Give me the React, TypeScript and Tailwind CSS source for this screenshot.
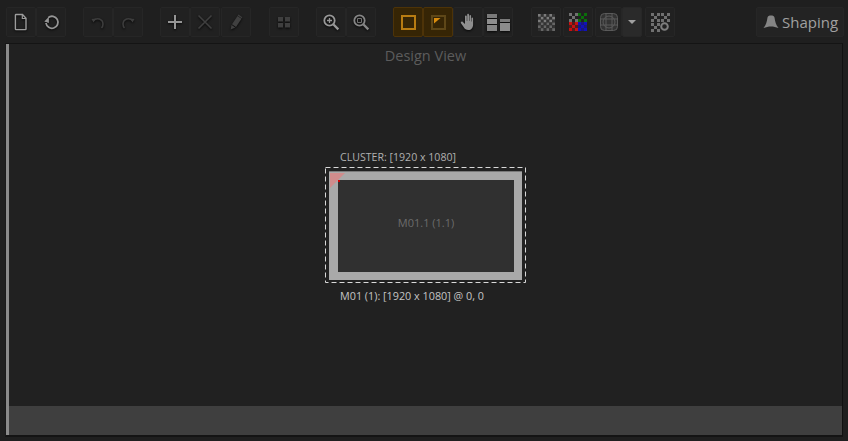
import React from "react";

const base = "flex items-center justify-center h-[30px] rounded-[2px] border border-[#262626] bg-[#212121] shrink-0";

function Btn({ w = 30, on = false, children }: { w?: number; on?: boolean; children?: React.ReactNode }) {
  return (
    <div
      className={on ? "flex items-center justify-center h-[30px] rounded-[2px] border border-[#4d3308] bg-[#362505] shrink-0" : base}
      style={{ width: w }}
    >
      {children}
    </div>
  );
}

const Ic = ({ children, s = 22 }: { children: React.ReactNode; s?: number }) => (
  <svg width={s} height={s} viewBox="0 0 22 22" fill="none" className="drop-shadow-[0_1px_1px_rgba(0,0,0,0.8)]">
    {children}
  </svg>
);

function Checker({ size = 17 }: { size?: number }) {
  const cells: React.ReactNode[] = [];
  for (let y = 0; y < 6; y++)
    for (let x = 0; x < 6; x++)
      cells.push(<rect key={`${x}-${y}`} x={x * 3} y={y * 3} width="3" height="3" fill={(x + y) % 2 === 0 ? (y < 3 ? "#7c7c7c" : "#666") : "#333"} />);
  return (
    <svg width={size} height={size} viewBox="0 0 18 18" className="blur-[0.3px]">
      {cells}
    </svg>
  );
}

function Quad({ color, x0, y0 }: { color: string; x0: number; y0: number }) {
  const cells: React.ReactNode[] = [];
  for (let y = 0; y < 3; y++)
    for (let x = 0; x < 3; x++)
      if ((x + y) % 2 === 0) cells.push(<rect key={`${x}-${y}`} x={x0 + x * 3} y={y0 + y * 3} width="3" height="3" fill={color} />);
  return <>{cells}</>;
}

export default function App() {
  return (
    <div className="w-[848px] h-[441px] bg-[#1f1f1f] flex flex-col overflow-hidden font-['Open_Sans',sans-serif]">
      <div className="h-[43px] shrink-0 pt-[7px] pl-[6px] pr-[4px] flex items-start">
        <Btn>
          <Ic>
            <path d="M6 3.500h6.500l3.500 3.800V18a.6.6 0 0 1-.6.6H6a.6.6 0 0 1-.6-.6V4a.6.6 0 0 1 .6-.5z" stroke="#9c9c9c" strokeWidth="1.400" />
            <path d="M12.300 3.500v4h3.700" stroke="#9c9c9c" strokeWidth="1.200" />
          </Ic>
        </Btn>
        <Btn>
          <Ic>
            <path d="M8.200 6.600A6 6 0 1 1 6 12" stroke="#969696" strokeWidth="1.800" />
            <path d="M4.300 10.600l4.600-4.900v6.200z" fill="#969696" />
          </Ic>
        </Btn>
        <div className="ml-[17px] flex">
          <Btn>
            <Ic>
              <path d="M6.500 9.500A5.500 5.500 0 0 1 16 13c0 1.700-.5 3-1.500 4" stroke="#3d3d3d" strokeWidth="1.600" />
              <path d="M4.500 8l4.500-.5-2.500 4z" fill="#3d3d3d" />
            </Ic>
          </Btn>
          <Btn>
            <Ic>
              <path d="M15.500 9.500A5.500 5.500 0 0 0 6 13c0 1.700.5 3 1.500 4" stroke="#3d3d3d" strokeWidth="1.600" />
              <path d="M17.500 8l-4.500-.5 2.500 4z" fill="#3d3d3d" />
            </Ic>
          </Btn>
        </div>
        <div className="ml-[17px] flex">
          <Btn>
            <Ic>
              <path d="M11 4v14M4 11h14" stroke="#959595" strokeWidth="2" />
            </Ic>
          </Btn>
          <Btn>
            <Ic>
              <path d="M4.500 4.500l13 13M17.500 4.500l-13 13" stroke="#3f3f3f" strokeWidth="1.600" />
            </Ic>
          </Btn>
          <div className="ml-[1px]">
            <Btn>
              <Ic>
                <path d="M12.500 5l4 2.800-5.500 8.200-4-2.800z" fill="#404040" />
                <path d="M6.500 14l3.800 2.600-4.600 2z" fill="#404040" />
                <path d="M13.500 3.500l3.800 2.700-.8 1-3.800-2.700z" fill="#404040" />
              </Ic>
            </Btn>
          </div>
        </div>
        <div className="ml-[18px]">
          <Btn>
            <Ic>
              <path d="M5 6h5v4.500H5zM12 6h5v4.500h-5zM5 12h5v4.500H5zM12 12h5v4.500h-5z" fill="#3f3f3f" />
            </Ic>
          </Btn>
        </div>
        <div className="ml-[17px] flex">
          <Btn>
            <Ic>
              <circle cx="9.500" cy="9.500" r="5.200" stroke="#989898" strokeWidth="1.800" />
              <path d="M13.500 13.500l4.800 4.800" stroke="#989898" strokeWidth="2.400" />
              <path d="M7 9.500h5M9.500 7v5" stroke="#989898" strokeWidth="1.300" />
            </Ic>
          </Btn>
          <Btn>
            <Ic>
              <circle cx="9.500" cy="9.500" r="5.200" stroke="#868686" strokeWidth="1.800" />
              <path d="M13.500 13.500l4.800 4.800" stroke="#868686" strokeWidth="2.400" />
              <path d="M7.500 7.500h4v4h-4z" stroke="#707070" strokeWidth="1" />
            </Ic>
          </Btn>
        </div>
        <div className="ml-[17px] flex">
          <Btn on>
            <div className="w-[15px] h-[15px] border-2 border-[#b87c12]" />
          </Btn>
          <Btn on>
            <div className="w-[15px] h-[15px] border-2 border-[#5e4718] flex">
              <svg width="11" height="11" viewBox="0 0 11 11">
                <path d="M1 1h6.500L1 6.500z" fill="#d98c0e" />
              </svg>
            </div>
          </Btn>
          <Btn>
            <Ic>
              <path
                d="M8 5.500c0-1.400 1.800-1.400 1.800 0V10l.4-.1V3.800c0-1.400 1.800-1.400 1.800 0v6l.4.100V5c0-1.300 1.700-1.300 1.700 0v5.500l.4.100V7.500c0-1.200 1.600-1.200 1.600 0v6c0 3.500-2 5.500-4.700 5.500-2.300 0-3.500-.8-4.800-3L4 12.200c-.7-1.200.8-2.300 1.800-1.300L8 13z"
                fill="#8e8e8e"
              />
            </Ic>
          </Btn>
          <Btn>
            <svg width="24" height="24" viewBox="0 0 24 24" className="drop-shadow-[0_1px_1px_rgba(0,0,0,0.8)]">
              <rect x="1" y="4" width="10" height="4" fill="#7a7a7a" />
              <rect x="1" y="9" width="10" height="5" fill="#8e8e8e" />
              <rect x="1" y="15" width="10" height="6" fill="#858585" />
              <rect x="14" y="9" width="10" height="3" fill="#7a7a7a" />
              <rect x="14" y="13" width="10" height="8" fill="#8c8c8c" />
            </svg>
          </Btn>
        </div>
        <div className="ml-[18px] flex gap-[2px]">
          <Btn>
            <Checker />
          </Btn>
          <Btn>
            <svg width="22" height="22" viewBox="0 0 22 22">
              <Quad color="#707070" x0={2} y0={2} />
              <Quad color="#0a6e0a" x0={11} y0={2} />
              <Quad color="#c81010" x0={2} y0={11} />
              <Quad color="#1212b8" x0={11} y0={11} />
              <rect x="2" y="11" width="9" height="9" fill="#c81010" opacity="0.3" />
              <rect x="11" y="11" width="9" height="9" fill="#1212b8" opacity="0.6" />
            </svg>
          </Btn>
          <div className="flex">
            <Btn w={27}>
              <svg width="18" height="18" viewBox="0 0 18 18" fill="none" stroke="#5a5a5a" strokeWidth="1">
                <rect x="0.500" y="0.500" width="17" height="17" rx="4" fill="#333" />
                <circle cx="9" cy="9" r="6" />
                <path d="M1 6h16M1 12h16M6 1v16M12 1v16" />
              </svg>
            </Btn>
            <div className="w-[20px] h-[30px] bg-[#2a2a2a] border border-[#272727] rounded-[2px] flex items-center justify-center">
              <div className="w-0 h-0 border-l-[4px] border-r-[4px] border-t-[4px] border-l-transparent border-r-transparent border-t-[#a0a0a0]" />
            </div>
          </div>
          <div className="ml-[1px]">
            <Btn>
              <svg width="20" height="20" viewBox="0 0 20 20">
                <Quad color="#707070" x0={1} y0={1} />
                <Quad color="#707070" x0={11} y0={1} />
                <Quad color="#707070" x0={1} y0={11} />
                <circle cx="14.500" cy="14.500" r="3.300" fill="none" stroke="#7e7e7e" strokeWidth="2" />
              </svg>
            </Btn>
          </div>
        </div>
        <div className="ml-auto w-[88px] h-[30px] rounded-[2px] border border-[#262626] bg-[#232323] flex items-center pl-[6px] gap-[3px]">
          <svg width="16" height="14" viewBox="0 0 16 14">
            <path d="M4.500 2.500C5 1 6 .6 8 .6s3 .4 3.500 1.900c.6 4 1.500 7.500 4 10.500-2.500-1-5-1.600-7.500-1.600S3 12 .5 13c2.500-3 3.400-6.500 4-10.500z" fill="#858585" />
          </svg>
          <span className="text-[15px] leading-none text-[#a0a0a0]">Shaping</span>
        </div>
      </div>

      <div className="ml-[5px] mr-[5px] h-[394px] flex border-t border-t-[#141414] border-r border-r-[#111] border-b-2 border-b-[#141414] border-l border-l-[#1a1a1a] bg-[#212121]">
        <div className="w-[3px] bg-[#8a8a8a] shrink-0" />
        <div className="flex-1 flex flex-col">
          <div className="flex-1 flex flex-col items-center">
            <div className="mt-[2px] text-[14.500px] leading-[20px] text-[#5c5c5c]">Design View</div>
            <div className="w-[201px] mt-[84px]">
              <div className="ml-[15px] h-[15px] text-[10.600px] leading-[15px] text-[#b0b0b0] whitespace-nowrap">CLUSTER: [1920 x 1080]</div>
              <div className="relative mt-[2px] h-[116px] pl-[4px] pt-[4px] pr-[4px] pb-[3px]">
                <svg width="201" height="116" className="absolute left-0 top-0">
                  <rect x="0.500" y="0.500" width="200" height="115" fill="none" stroke="#d8d8d8" strokeWidth="1" strokeDasharray="5 3" />
                </svg>
                <div className="relative h-full border-t border-t-[#7a7a7a] bg-[#a9a9a9] pl-[9px] pr-[8px] pt-[8px] pb-[8px]">
                  <div className="h-full bg-[#303030] flex items-center justify-center pb-[5px] text-[11px] text-[#6c6c6c]">M01.1 (1.1)</div>
                  <svg width="16" height="16" viewBox="0 0 16 16" className="absolute left-0 top-0">
                    <path d="M1 1h15L1 16z" fill="#d08c8c" />
                    <rect x="9" y="8" width="2" height="2" fill="#d00000" />
                  </svg>
                </div>
              </div>
              <div className="ml-[15px] mt-[5px] text-[10.800px] leading-[15px] text-[#c4c4c4] whitespace-nowrap">M01 (1): [1920 x 1080] @ 0, 0</div>
            </div>
          </div>
          <div className="h-[29px] bg-[#3f3f3f] shrink-0" />
        </div>
      </div>
    </div>
  );
}
